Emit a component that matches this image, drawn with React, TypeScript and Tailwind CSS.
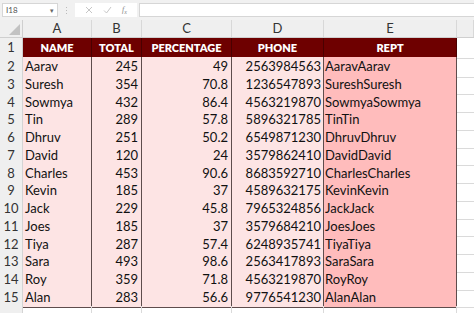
import React from "react";

const rows: [string, number, string, string][] = [
  ["Aarav", 245, "49", "2563984563"],
  ["Suresh", 354, "70.8", "1236547893"],
  ["Sowmya", 432, "86.4", "4563219870"],
  ["Tin", 289, "57.8", "5896321785"],
  ["Dhruv", 251, "50.2", "6549871230"],
  ["David", 120, "24", "3579862410"],
  ["Charles", 453, "90.6", "8683592710"],
  ["Kevin", 185, "37", "4589632175"],
  ["Jack", 229, "45.8", "7965324856"],
  ["Joes", 185, "37", "3579684210"],
  ["Tiya", 287, "57.4", "6248935741"],
  ["Sara", 493, "98.6", "2563417893"],
  ["Roy", 359, "71.8", "4563219870"],
  ["Alan", 283, "56.6", "9776541230"],
];

const cols = "grid grid-cols-[23px_69px_50px_90px_92px_133px_1fr]";

export default function App() {
  return (
    <div
      className="w-[474px] h-[313px] overflow-hidden bg-white text-[#111]"
      style={{ fontFamily: "Lato, 'Open Sans', sans-serif" }}
    >
      {/* formula bar */}
      <div className="h-[20px] bg-[#f1f1f1] flex items-start pt-[3px] pl-[2px]">
        <div className="w-[56px] h-[14px] bg-white border border-[#d6d6d6] flex items-center justify-between px-[3px]">
          <span className="text-[8px] text-[#555] leading-none">I18</span>
          <span className="text-[7px] text-[#666] leading-none">▾</span>
        </div>
        <div className="w-[17px] h-[14px] flex flex-col items-center justify-center gap-[2px]">
          <span className="w-[1px] h-[1px] bg-[#bbb]" />
          <span className="w-[1px] h-[1px] bg-[#bbb]" />
          <span className="w-[1px] h-[1px] bg-[#bbb]" />
        </div>
        <div className="w-[62px] h-[14px] bg-white flex items-center gap-[10px] pl-[10px] text-[#b5b5b5]">
          <svg width="8" height="8" viewBox="0 0 8 8">
            <path d="M1 1 L7 7 M7 1 L1 7" stroke="#c0c0c0" strokeWidth="0.9" />
          </svg>
          <svg width="9" height="8" viewBox="0 0 9 8">
            <path d="M1 4.5 L3.5 7 L8 1" stroke="#c0c0c0" strokeWidth="0.9" fill="none" />
          </svg>
          <span className="text-[8px] italic text-[#888] leading-none" style={{ fontFamily: "'Liberation Serif', serif" }}>
            f<sub className="text-[6px]">x</sub>
          </span>
        </div>
        <div className="flex-1 h-[14px] bg-white border border-r-0 border-[#d6d6d6] ml-[2px]" />
      </div>

      {/* column headers */}
      <div className={`${cols} h-[18px] bg-[#efefef] border-b border-[#cfcfcf] text-[13px] text-[#333]`}>
        <div className="relative border-r border-[#cfcfcf]">
          <svg className="absolute right-[2px] bottom-[2px]" width="11" height="11" viewBox="0 0 11 11">
            <path d="M11 0 L11 11 L0 11 Z" fill="#c2c2c2" />
          </svg>
        </div>
        {["A", "B", "C", "D", "E", ""].map((c, i) => (
          <div key={i} className="flex items-center justify-center border-r border-[#d8d8d8] leading-none">
            {c}
          </div>
        ))}
      </div>

      {/* row 1 */}
      <div className={`${cols} h-[19px] text-[11px]`}>
        <div className="bg-[#efefef] border-r border-b border-[#cfcfcf] flex items-center justify-center text-[13px] text-[#333]">
          1
        </div>
        {["NAME", "TOTAL", "PERCENTAGE", "PHONE", "REPT"].map((h) => (
          <div
            key={h}
            className="bg-[#6e0000] text-white font-extrabold flex items-center justify-center border-r border-[#4a0000]"
          >
            {h}
          </div>
        ))}
        <div className="border-b border-[#dadada]" />
      </div>

      {/* data rows */}
      {rows.map((r, i) => (
        <div key={i} className={`${cols} h-[17.75px] text-[13px]`}>
          <div className="bg-[#efefef] border-r border-b border-[#d4d4d4] flex items-center justify-center text-[13px] text-[#333]">
            {i + 2}
          </div>
          <div className="bg-[#fde4e4] border-r border-b border-[#5e4c4c] flex items-center pl-[2px]">{r[0]}</div>
          <div className="bg-[#fde4e4] border-r border-b border-[#5e4c4c] flex items-center justify-end pr-[3px]">{r[1]}</div>
          <div className="bg-[#fde4e4] border-r border-b border-[#5e4c4c] flex items-center justify-end pr-[3px]">{r[2]}</div>
          <div className="bg-[#fde4e4] border-r border-b border-[#5e4c4c] flex items-center justify-end pr-[2px]">{r[3]}</div>
          <div className="bg-[#ffbcbc] border-r border-b border-[#5e4c4c] flex items-center pl-[1px]">
            {r[0] + r[0]}
          </div>
          <div className="border-b border-[#dadada]" />
        </div>
      ))}

      {/* row 16 */}
      <div className={`${cols} h-[18px]`}>
        <div className="bg-[#efefef] border-r border-[#d4d4d4]" />
        {[0, 1, 2, 3, 4].map((k) => (
          <div key={k} className="border-r border-[#dadada]" />
        ))}
        <div />
      </div>
    </div>
  );
}
